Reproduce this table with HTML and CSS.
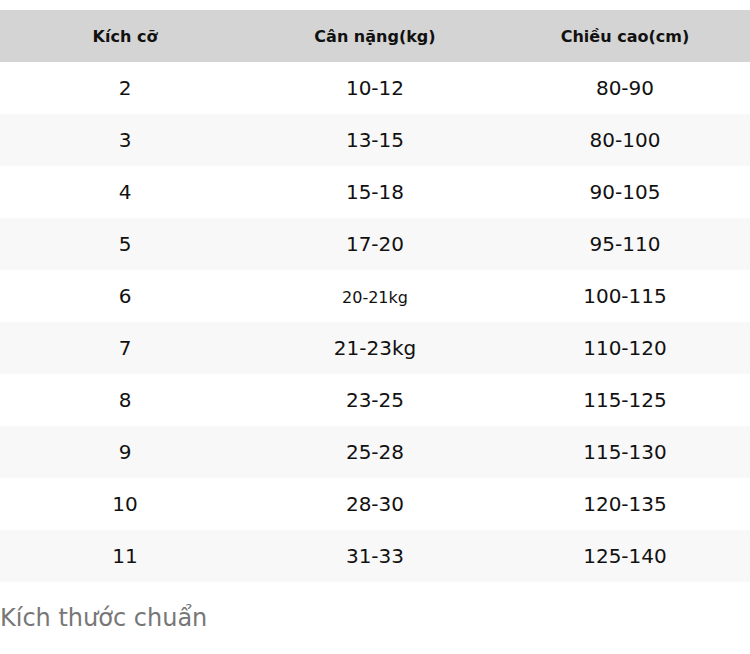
FILE: index.html
```html
<!DOCTYPE html>
<html lang="vi">
<head>
<meta charset="utf-8">
<title>Kích thước chuẩn</title>
<link rel="stylesheet" href="styles.css">
</head>
<body>
<div class="wrap">
  <table class="size-table">
    <thead>
      <tr><th>Kích cỡ</th><th>Cân nặng(kg)</th><th>Chiều cao(cm)</th></tr>
    </thead>
    <tbody>
      <tr><td>2</td><td>10-12</td><td>80-90</td></tr>
      <tr><td>3</td><td>13-15</td><td>80-100</td></tr>
      <tr><td>4</td><td>15-18</td><td>90-105</td></tr>
      <tr><td>5</td><td>17-20</td><td>95-110</td></tr>
      <tr><td>6</td><td><span class="small">20-21kg</span></td><td>100-115</td></tr>
      <tr><td>7</td><td>21-23kg</td><td>110-120</td></tr>
      <tr><td>8</td><td>23-25</td><td>115-125</td></tr>
      <tr><td>9</td><td>25-28</td><td>115-130</td></tr>
      <tr><td>10</td><td>28-30</td><td>120-135</td></tr>
      <tr><td>11</td><td>31-33</td><td>125-140</td></tr>
    </tbody>
  </table>
  <p class="caption">Kích thước chuẩn</p>
</div>
</body>
</html>
```
FILE: styles.css
```css
html, body {
  margin: 0;
  padding: 0;
  background: #ffffff;
}
body {
  font-family: "DejaVu Sans", sans-serif;
  color: #111;
}
.wrap {
  padding-top: 10px;
}
.size-table {
  width: 750px;
  border-collapse: collapse;
  table-layout: fixed;
}
.size-table th,
.size-table td {
  width: 33.333%;
  height: 52px;
  padding: 0;
  text-align: center;
  vertical-align: middle;
}
.size-table th {
  background: #d4d4d4;
  font-size: 16px;
  font-weight: bold;
  color: #111;
}
.size-table td {
  font-size: 20px;
}
.size-table tbody tr:nth-child(even) td {
  background: #f8f8f8;
}
.small {
  font-size: 16px;
}
.caption {
  margin: 22px 0 0 0;
  font-size: 24px;
  line-height: 28px;
  color: #777;
}
```
